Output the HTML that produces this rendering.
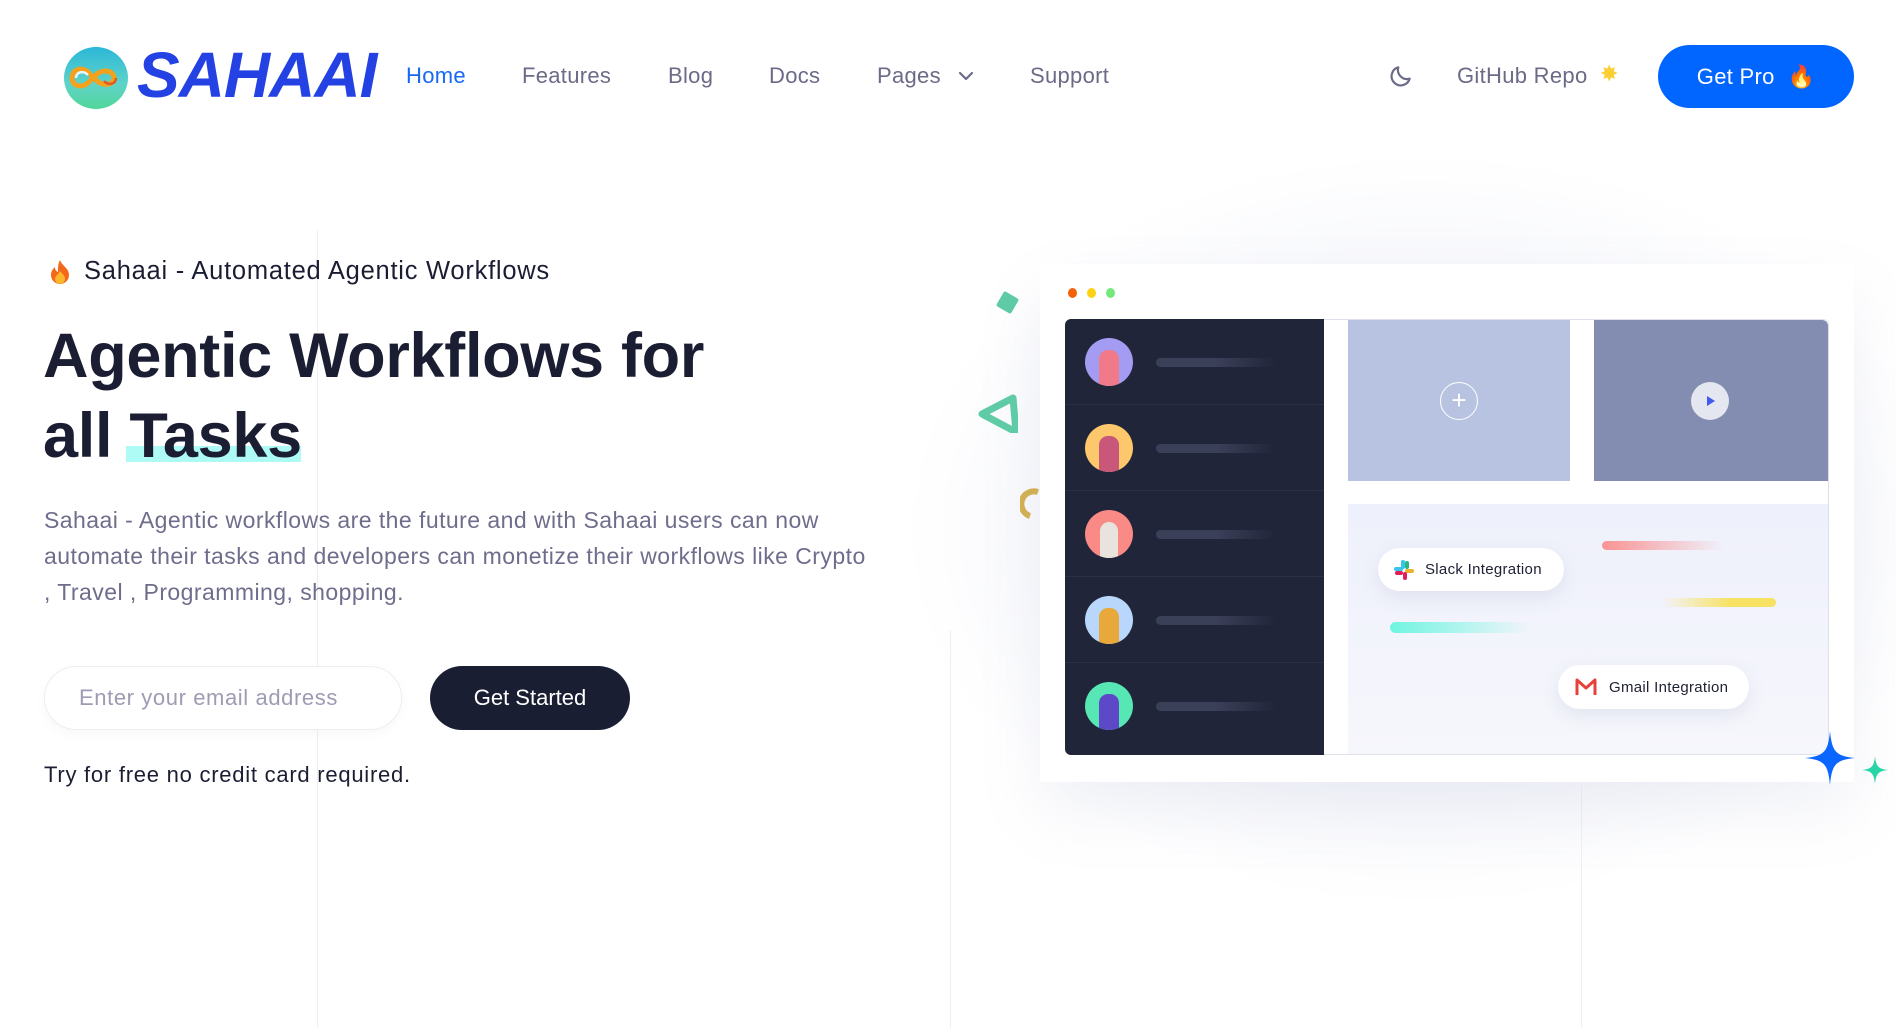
<!DOCTYPE html>
<html><head><meta charset="utf-8"><style>
*{margin:0;padding:0;box-sizing:border-box}
body{width:1896px;height:1028px;overflow:hidden;background:#fff;font-family:"Liberation Sans",sans-serif;position:relative}
.a{position:absolute}
.nav{font-size:22px;color:#6b6a87;top:63px;letter-spacing:.3px}
.glow{left:900px;top:150px;width:1050px;height:760px;background:radial-gradient(ellipse at center,#eef0f7 0%,#f6f7fb 45%,rgba(255,255,255,0) 70%)}
.vl{width:1px;background:#efeff3}
.row{left:1065px;width:259px;height:86px;border-bottom:1px solid #2d3147}
.av{left:20px;top:19px;width:48px;height:48px;border-radius:50%;overflow:hidden}
.bar{left:91px;top:39px;width:120px;height:9px;border-radius:5px;background:linear-gradient(90deg,#3b4059,#3b4059 50%,rgba(59,64,89,0))}
.pill{background:#fff;border-radius:22px;box-shadow:0 6px 18px rgba(120,130,170,.15);font-size:15px;color:#1e2033;display:flex;align-items:center}
.fig{position:absolute;left:14px;top:12px;width:20px;height:36px;border-radius:9px 9px 3px 3px}
</style></head><body>
<div class="a glow"></div>
<div class="a vl" style="left:317px;top:230px;height:798px"></div>
<div class="a vl" style="left:950px;top:630px;height:398px"></div>
<div class="a vl" style="left:1581px;top:786px;height:242px"></div>

<svg class="a" style="left:62px;top:46px" width="68" height="64" viewBox="0 0 68 64">
<defs><linearGradient id="lg" x1="0" y1="0" x2="0" y2="1"><stop offset="0" stop-color="#2bb7d8"/><stop offset=".6" stop-color="#5fd3c8"/><stop offset="1" stop-color="#52d69a"/></linearGradient></defs>
<ellipse cx="34" cy="32" rx="32" ry="31" fill="url(#lg)"/>
<path d="M10 32c0-9 10-12 17-5l7 7c7 7 18 5 18-2s-11-10-18-3l-7 7c-7 7-17 4-17-4z" fill="none" stroke="#f4a21e" stroke-width="5"/>
<path d="M14 32c0-6 7-8 12-3" fill="none" stroke="#e9f6fb" stroke-width="2.5"/>
<path d="M54 32c0 6-7 8-12 3" fill="none" stroke="#e05a23" stroke-width="2.5"/>
</svg>
<div class="a" style="left:137px;top:40px;font-size:64px;font-weight:bold;font-style:italic;color:#2442e3;letter-spacing:-1px;line-height:70px">SAHAAI</div>

<div class="a nav" style="left:406px;color:#1769f5">Home</div>
<div class="a nav" style="left:522px">Features</div>
<div class="a nav" style="left:668px">Blog</div>
<div class="a nav" style="left:769px">Docs</div>
<div class="a nav" style="left:877px">Pages</div>
<svg class="a" style="left:958px;top:70px" width="16" height="12" viewBox="0 0 16 12"><path d="M2 3l6 6 6-6" fill="none" stroke="#6b6a87" stroke-width="2.2" stroke-linecap="round" stroke-linejoin="round"/></svg>
<div class="a nav" style="left:1030px">Support</div>
<svg class="a" style="left:1388px;top:63px" width="26" height="26" viewBox="0 0 24 24"><path d="M20 14.5A8.5 8.5 0 0 1 9.5 4a8.5 8.5 0 1 0 10.5 10.5z" fill="none" stroke="#6b6a87" stroke-width="2" stroke-linejoin="round"/></svg>
<div class="a nav" style="left:1457px">GitHub Repo</div>
<div class="a" style="left:1600px;top:61px;font-size:22px;color:#fbcf33">✸</div>
<div class="a" style="left:1658px;top:45px;width:196px;height:63px;border-radius:32px;background:#0166ff;color:#fff;font-size:22px;letter-spacing:.3px;display:flex;align-items:center;justify-content:center">Get Pro&nbsp;&nbsp;<span style="color:#ff7a1a">🔥</span></div>

<svg class="a" style="left:49px;top:259px" width="22" height="26" viewBox="0 0 22 26"><path d="M11 1c2 6 9 8 9 15a9 9 0 0 1-18 0c0-4 2-6 4-8 0 3 1 4 3 5 0-5 0-8 2-12z" fill="#f4681a"/><path d="M11 12c2 3 5 4 5 8a5 5 0 0 1-10 0c0-3 3-4 5-8z" fill="#fcb62b"/></svg>
<div class="a" style="left:84px;top:257px;font-size:25.5px;letter-spacing:.75px;color:#1b1e33">Sahaai - Automated Agentic Workflows</div>
<div class="a" style="left:126px;top:446px;width:175px;height:16px;background:#aefaf5"></div>
<div class="a" style="left:43px;top:316px;font-size:63px;font-weight:bold;color:#1b1e33;line-height:80px;letter-spacing:-.3px">Agentic Workflows for<br>all Tasks</div>
<div class="a" style="left:44px;top:502px;width:900px;font-size:23px;letter-spacing:.45px;line-height:36px;color:#6e6d8c;white-space:nowrap">Sahaai - Agentic workflows are the future and with Sahaai users can now<br>automate their tasks and developers can monetize their workflows like Crypto<br>, Travel , Programming, shopping.</div>
<div class="a" style="left:44px;top:666px;width:358px;height:64px;border-radius:32px;border:1px solid #ededf2;box-shadow:0 4px 12px rgba(0,0,0,.03);background:#fff;font-size:22px;letter-spacing:.6px;color:#9d9cb3;padding-left:34px;line-height:62px">Enter your email address</div>
<div class="a" style="left:430px;top:666px;width:200px;height:64px;border-radius:32px;background:#1a1e33;color:#fff;font-size:22px;line-height:64px;text-align:center">Get Started</div>
<div class="a" style="left:44px;top:762px;font-size:22px;letter-spacing:.75px;color:#1b1e33">Try for free no credit card required.</div>

<div class="a" style="left:999px;top:294px;width:17px;height:17px;background:#5fcca6;transform:rotate(30deg);border-radius:2px"></div>
<svg class="a" style="left:978px;top:393px" width="40" height="40" viewBox="0 0 40 40"><path d="M4 21L35 5l3 34z" fill="none" stroke="#5fcca6" stroke-width="7" stroke-linejoin="round"/></svg>
<svg class="a" style="left:1020px;top:488px" width="20" height="36"><path d="M18 4a12 12 0 0 0-8 24" fill="none" stroke="#d4b14f" stroke-width="6"/></svg>

<div class="a" style="left:1040px;top:264px;width:814px;height:518px;background:#fff;box-shadow:0 30px 60px rgba(140,150,190,.12)"></div>
<div class="a" style="left:1068px;top:288px;width:9px;height:10px;border-radius:50%;background:#f5610a"></div>
<div class="a" style="left:1087px;top:288px;width:9px;height:10px;border-radius:50%;background:#fcd116"></div>
<div class="a" style="left:1106px;top:288px;width:9px;height:10px;border-radius:50%;background:#74e87c"></div>
<div class="a" style="left:1065px;top:319px;width:764px;height:436px;border:1px solid #dfe1ea;border-radius:6px;overflow:hidden;background:#fff"></div>
<div class="a" style="left:1065px;top:319px;width:259px;height:436px;background:#212539;border-radius:6px 0 0 6px"></div>
<div class="a row" style="top:319px"><div class="a av" style="background:#a49cf2"><div class="fig" style="background:#f07a8a"></div></div><div class="a bar"></div></div>
<div class="a row" style="top:405px"><div class="a av" style="background:#fcc86b"><div class="fig" style="background:#c8577a"></div></div><div class="a bar"></div></div>
<div class="a row" style="top:491px"><div class="a av" style="background:#f98a85"><div class="fig" style="background:#e9e3dd;left:15px;width:18px"></div></div><div class="a bar"></div></div>
<div class="a row" style="top:577px"><div class="a av" style="background:#b8d7fb"><div class="fig" style="background:#e8a93a"></div></div><div class="a bar"></div></div>
<div class="a row" style="top:663px;border:none"><div class="a av" style="background:#56e7b4"><div class="fig" style="background:#5d49c8"></div></div><div class="a bar"></div></div>
<div class="a" style="left:1348px;top:320px;width:222px;height:161px;background:#b8c3e1"></div>
<div class="a" style="left:1440px;top:382px;width:38px;height:38px;border:1.5px solid #fff;border-radius:50%;color:#fff;font-size:26px;line-height:34px;text-align:center">+</div>
<div class="a" style="left:1594px;top:320px;width:234px;height:161px;background:#828db1;border-radius:0 6px 0 0"></div>
<div class="a" style="left:1691px;top:382px;width:38px;height:38px;background:#e4e6f0;border-radius:50%"></div>
<svg class="a" style="left:1705px;top:395px" width="12" height="12"><path d="M2 1l8 5-8 5z" fill="#3e5af0"/></svg>
<div class="a" style="left:1348px;top:504px;width:480px;height:250px;background:linear-gradient(180deg,#eef0fb,#f6f7fc)"></div>
<div class="a" style="left:1602px;top:541px;width:122px;height:9px;border-radius:5px;background:linear-gradient(90deg,#f99393,rgba(249,147,147,0))"></div>
<div class="a" style="left:1662px;top:598px;width:114px;height:9px;border-radius:5px;background:linear-gradient(90deg,rgba(248,226,100,0),#f8e264 60%)"></div>
<div class="a" style="left:1390px;top:622px;width:140px;height:11px;border-radius:6px;background:linear-gradient(90deg,#6ff5e0,rgba(111,245,224,0))"></div>
<div class="a pill" style="left:1378px;top:548px;width:186px;height:43px;padding-left:15px">
<svg width="22" height="22" viewBox="0 0 22 22" style="margin-right:10px"><rect x="8" y="1" width="4" height="9" rx="2" fill="#36c5f0"/><rect x="1" y="8" width="9" height="4" rx="2" fill="#36c5f0"/><rect x="12" y="2" width="4" height="8" rx="2" fill="#2eb67d"/><rect x="12" y="10" width="9" height="4" rx="2" fill="#ecb22e"/><rect x="2" y="12" width="8" height="4" rx="2" fill="#e01e5a"/><rect x="10" y="13" width="4" height="8" rx="2" fill="#e01e5a"/></svg><span style="letter-spacing:.3px">Slack Integration</span></div>
<div class="a pill" style="left:1558px;top:665px;width:191px;height:44px;padding-left:17px">
<svg width="22" height="18" viewBox="0 0 22 18" style="margin-right:12px"><path d="M2 17V2l9 8 9-8v15" fill="none" stroke="#e8403a" stroke-width="3" stroke-linejoin="round"/></svg><span style="letter-spacing:.3px">Gmail Integration</span></div>
<svg class="a" style="left:1805px;top:731px" width="50" height="54" viewBox="0 0 50 54"><path d="M25 0C27 20 30 25 50 27C30 29 27 34 25 54C23 34 20 29 0 27C20 25 23 20 25 0z" fill="#0a66ff"/></svg>
<svg class="a" style="left:1862px;top:756px" width="26" height="28" viewBox="0 0 26 28"><path d="M13 0C14 10 16 13 26 14C16 15 14 18 13 28C12 18 10 15 0 14C10 13 12 10 13 0z" fill="#26d6a6"/></svg>
</body></html>
